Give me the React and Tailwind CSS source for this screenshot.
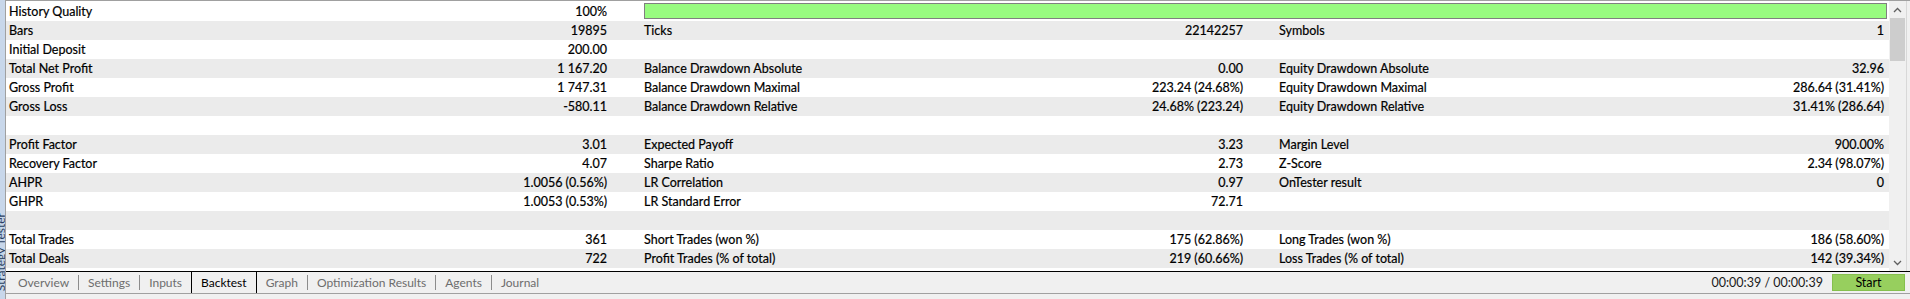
import React from "react";

const rows = [
  ["History Quality", "100%", "BAR"],
  ["Bars", "19895", "Ticks", "22142257", "Symbols", "1"],
  ["Initial Deposit", "200.00", "", "", "", ""],
  ["Total Net Profit", "1 167.20", "Balance Drawdown Absolute", "0.00", "Equity Drawdown Absolute", "32.96"],
  ["Gross Profit", "1 747.31", "Balance Drawdown Maximal", "223.24 (24.68%)", "Equity Drawdown Maximal", "286.64 (31.41%)"],
  ["Gross Loss", "-580.11", "Balance Drawdown Relative", "24.68% (223.24)", "Equity Drawdown Relative", "31.41% (286.64)"],
  ["", "", "", "", "", ""],
  ["Profit Factor", "3.01", "Expected Payoff", "3.23", "Margin Level", "900.00%"],
  ["Recovery Factor", "4.07", "Sharpe Ratio", "2.73", "Z-Score", "2.34 (98.07%)"],
  ["AHPR", "1.0056 (0.56%)", "LR Correlation", "0.97", "OnTester result", "0"],
  ["GHPR", "1.0053 (0.53%)", "LR Standard Error", "72.71", "", ""],
  ["", "", "", "", "", ""],
  ["Total Trades", "361", "Short Trades (won %)", "175 (62.86%)", "Long Trades (won %)", "186 (58.60%)"],
  ["Total Deals", "722", "Profit Trades (% of total)", "219 (60.66%)", "Loss Trades (% of total)", "142 (39.34%)"],
];

const tabs = ["Overview", "Settings", "Inputs", "Backtest", "Graph", "Optimization Results", "Agents", "Journal"];

function Chevron({ up }) {
  return (
    <svg width="9" height="6" viewBox="0 0 9 6">
      <path
        d={up ? "M1 5 L4.5 1.5 L8 5" : "M1 1 L4.5 4.5 L8 1"}
        fill="none"
        stroke="#606060"
        strokeWidth="1.3"
      />
    </svg>
  );
}

export default function App() {
  return (
    <div
      className="w-[1910px] h-[299px] bg-[#f0f0f0] flex overflow-hidden text-[12.5px] text-black leading-none"
      style={{ fontFamily: "Lato, 'Noto Sans', sans-serif" }}
    >
      {/* left docked strip */}
      <div className="w-[5px] h-full bg-[#c8d7ea] relative overflow-hidden shrink-0">
        <div className="absolute left-[-5px] bottom-[8px] [writing-mode:vertical-rl] rotate-180 text-[12px] text-[#2a3f5f] whitespace-nowrap">
          Strategy Tester
        </div>
      </div>
      <div className="w-[1px] h-full bg-[#a0a0a0] shrink-0" />

      <div className="flex-1 flex flex-col">
        {/* table area */}
        <div className="h-[271px] border-t border-[#a0a0a0] flex bg-white">
          <div className="flex-1 flex flex-col pt-[1px] [-webkit-text-stroke:0.2px_currentColor]">
            {rows.map((r, i) => (
              <div
                key={i}
                className={`h-[19px] flex items-center pt-[2px] ${i % 2 === 1 ? "bg-[#ebebeb]" : "bg-white"}`}
              >
                <div className="w-[635px] flex justify-between pl-[3px] pr-[34px]">
                  <span>{r[0]}</span>
                  <span>{r[1]}</span>
                </div>
                {r[2] === "BAR" ? (
                  <div className="flex-1 pl-[3px] pr-[2px] h-[17px] pb-[1px] -mt-[2px]">
                    <div className="h-full bg-[#98fb80] border border-[#808080]" />
                  </div>
                ) : (
                  <>
                    <div className="w-[635px] flex justify-between pl-[3px] pr-[33px]">
                      <span>{r[2]}</span>
                      <span>{r[3]}</span>
                    </div>
                    <div className="flex-1 flex justify-between pl-[3px] pr-[5px]">
                      <span>{r[4]}</span>
                      <span>{r[5]}</span>
                    </div>
                  </>
                )}
              </div>
            ))}
          </div>
          {/* scrollbar */}
          <div className="w-[17px] bg-[#f0f0f0] flex flex-col items-center">
            <div className="h-[17px] w-full flex items-center justify-center">
              <Chevron up />
            </div>
            <div className="w-[15px] h-[43px] bg-[#cdcdcd]" />
            <div className="flex-1" />
            <div className="h-[17px] w-full flex items-center justify-center">
              <Chevron />
            </div>
          </div>
          <div className="w-[4px] bg-[#f0f0f0] border-l border-[#d8d8d8]" />
        </div>

        {/* tab bar */}
        <div className="h-[23px] border-t border-black border-b border-b-[#a0a0a0] flex items-stretch pr-[5px] text-[12px]">
          <div className="flex items-stretch pl-[3px]">
            {tabs.map((t, i) => {
              const active = t === "Backtest";
              const prevActive = tabs[i - 1] === "Backtest";
              return (
                <React.Fragment key={t}>
                  {i > 0 && !active && !prevActive && (
                    <div className="flex items-center">
                      <div className="w-[1px] h-[15px] bg-[#8c8c8c]" />
                    </div>
                  )}
                  <div
                    className={`flex items-center pt-[1px] ${
                      active ? "border-l border-r border-black text-black bg-[#f0f0f0] px-[9px]" : "text-[#6d6d6d] px-[9px]"
                    }`}
                  >
                    {t}
                  </div>
                </React.Fragment>
              );
            })}
          </div>
          <div className="flex-1" />
          <div className="flex items-center pr-[9px] pt-[1px] text-[12.5px] text-[#1a1a1a]">00:00:39 / 00:00:39</div>
          <div className="flex items-center py-[2px]">
            <div className="w-[73px] h-full bg-[#97cf5e] border border-[#85bf4d] flex items-center justify-center pt-[1px] text-[12.5px]">
              Start
            </div>
          </div>
        </div>
        <div className="flex-1 bg-[#f0f0f0]" />
      </div>
    </div>
  );
}
